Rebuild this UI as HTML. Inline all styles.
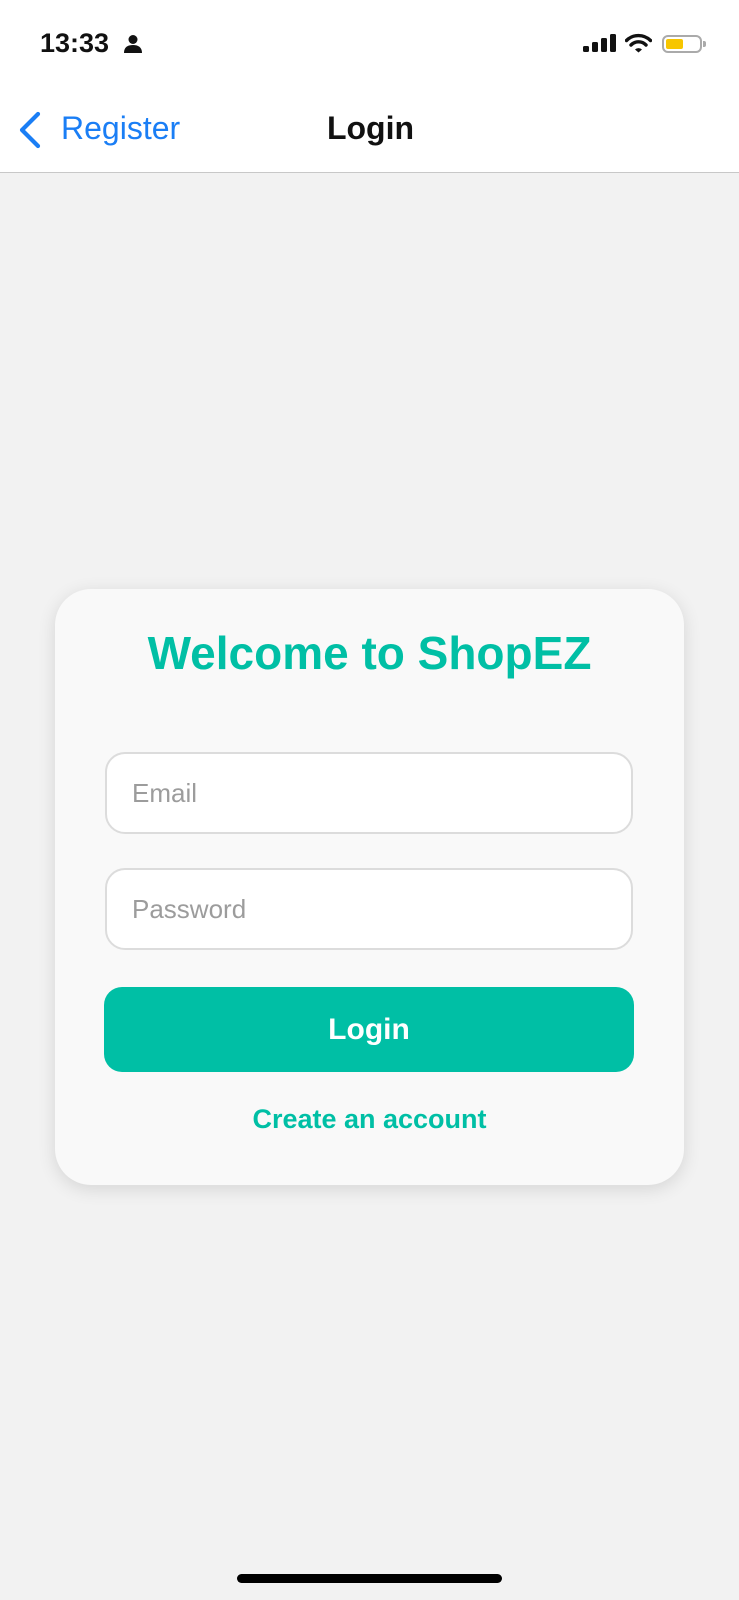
<!DOCTYPE html>
<html><head><meta charset="utf-8"><style>
*{margin:0;padding:0;box-sizing:border-box}
body{width:739px;height:1600px;background:#f2f2f2;font-family:"Liberation Sans",sans-serif;position:relative;overflow:hidden}
.top{position:absolute;left:0;top:0;width:739px;height:173px;background:#fff;border-bottom:1.5px solid #c8c8c8}
.abs{position:absolute}
.card{position:absolute;left:55px;top:589px;width:629px;height:596px;background:#f9f9f9;border-radius:36px;box-shadow:0 4px 18px rgba(0,0,0,0.12)}
.inp{position:absolute;left:50px;width:528px;height:82px;background:#fff;border:2px solid #dcdcdc;border-radius:20px;font-size:26px;color:#9c9c9c;padding-left:25px;line-height:78px}
.btn{position:absolute;left:49px;top:398px;width:530px;height:85px;background:#00bfa5;border-radius:18px;color:#fff;font-weight:bold;font-size:30px;text-align:center;line-height:85px}
</style></head><body>
<div class="top">
<div class="abs" style="left:40px;top:28px;font-size:27px;font-weight:bold;color:#111;letter-spacing:0px">13:33</div>
<svg class="abs" style="left:123px;top:34px" width="20" height="20" viewBox="0 0 20 20"><circle cx="10" cy="5.5" r="4.5" fill="#111"/><path d="M1 19c0-6 4-8 9-8s9 2 9 8z" fill="#111"/></svg>
<svg class="abs" style="left:583px;top:34px" width="33" height="19" viewBox="0 0 33 19"><rect x="0" y="12" width="6" height="6" rx="1.5" fill="#111"/><rect x="9" y="8" width="6" height="10" rx="1.5" fill="#111"/><rect x="18" y="4" width="6" height="14" rx="1.5" fill="#111"/><rect x="27" y="0" width="6" height="18" rx="1.5" fill="#111"/></svg>
<svg class="abs" style="left:625px;top:33px" width="27" height="20" viewBox="0 0 27 20"><path d="M1.5 7.5a17 17 0 0 1 24 0" stroke="#111" stroke-width="3.4" fill="none" stroke-linecap="round"/><path d="M6 12a10.5 10.5 0 0 1 15 0" stroke="#111" stroke-width="3.4" fill="none" stroke-linecap="round"/><path d="M10 16.5a5 5 0 0 1 7 0l-3.5 3z" fill="#111"/></svg>
<div class="abs" style="left:662px;top:35px;width:40px;height:18px;border:2px solid #aaa;border-radius:6px"></div>
<div class="abs" style="left:666px;top:39px;width:17px;height:10px;background:#f7c600;border-radius:2px"></div>
<div class="abs" style="left:703px;top:41px;width:3px;height:6px;background:#aaa;border-radius:0 2px 2px 0"></div>
<svg class="abs" style="left:17px;top:111px" width="26" height="38" viewBox="0 0 26 38"><path d="M21 3L5 19l16 16" stroke="#1a7ef5" stroke-width="4.2" fill="none" stroke-linecap="round" stroke-linejoin="round"/></svg>
<div class="abs" style="left:61px;top:110px;font-size:32px;color:#1a7ef5">Register</div>
<div class="abs" style="left:0;width:739px;top:110px;text-align:center;font-size:32px;color:#111;font-weight:bold;padding-left:2px">Login</div>
</div>
<div class="card">
<div class="abs" style="left:0;width:629px;top:37px;text-align:center;font-size:46px;font-weight:bold;color:#00bfa5">Welcome to ShopEZ</div>
<div class="inp" style="top:163px">Email</div>
<div class="inp" style="top:279px">Password</div>
<div class="btn">Login</div>
<div class="abs" style="left:0;width:629px;top:515px;text-align:center;font-size:27px;font-weight:bold;color:#00bfa5">Create an account</div>
</div>
<div class="abs" style="left:237px;top:1574px;width:265px;height:9px;background:#000;border-radius:5px"></div>
</body></html>
